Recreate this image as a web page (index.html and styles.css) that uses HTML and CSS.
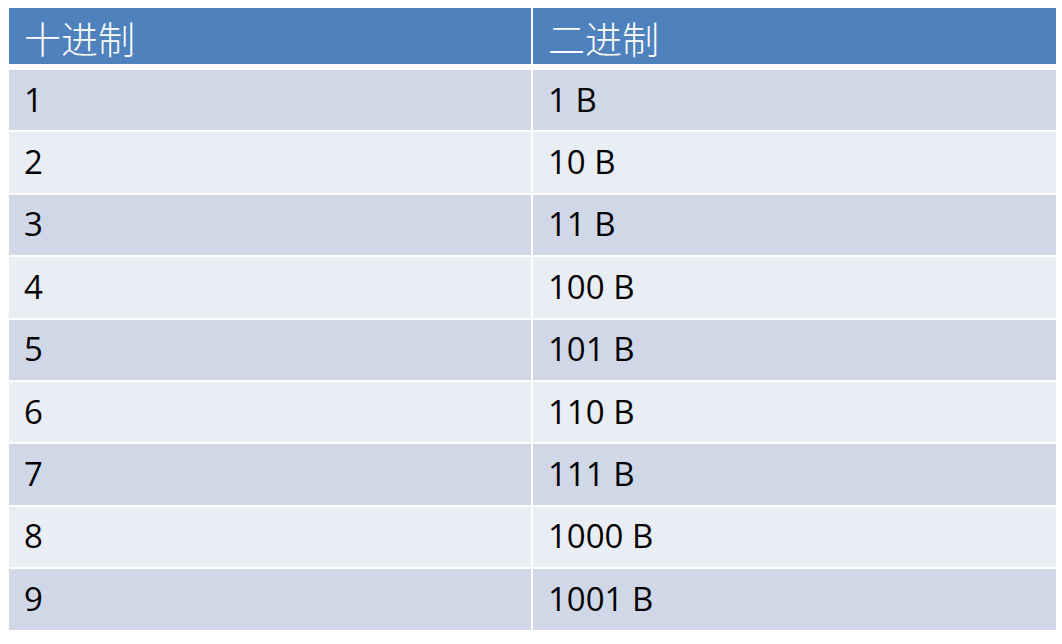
FILE: index.html
```html
<!DOCTYPE html>
<html lang="zh">
<head>
<meta charset="utf-8">
<link rel="stylesheet" href="styles.css">
</head>
<body>
<div class="table">
  <div class="cell head">十进制</div>
  <div class="cell head">二进制</div>
  <div class="cell odd">1</div><div class="cell odd">1 B</div>
  <div class="cell even">2</div><div class="cell even">10 B</div>
  <div class="cell odd">3</div><div class="cell odd">11 B</div>
  <div class="cell even">4</div><div class="cell even">100 B</div>
  <div class="cell odd">5</div><div class="cell odd">101 B</div>
  <div class="cell even">6</div><div class="cell even">110 B</div>
  <div class="cell odd">7</div><div class="cell odd">111 B</div>
  <div class="cell even">8</div><div class="cell even">1000 B</div>
  <div class="cell odd">9</div><div class="cell odd">1001 B</div>
</div>
</body>
</html>
```
FILE: styles.css
```css
html, body {
  background: #ffffff;
}
body {
  margin: 8px 0 0 9px;
}
.table {
  display: grid;
  grid-template-columns: 522px 523px;
  grid-template-rows: 60px repeat(9, 60.4px);
  column-gap: 2px;
  row-gap: 2px;
  width: 1047px;
}
.cell {
  display: flex;
  align-items: center;
  padding-left: 15px;
  font-family: "Open Sans", "Noto Sans CJK SC", sans-serif;
  font-size: 33px;
  color: #000000;
  padding-bottom: 2px;
  box-sizing: border-box;
}
.head {
  background: #4f81bd;
  color: #ffffff;
  margin-bottom: 4px;
  font-family: "Noto Sans CJK SC", sans-serif;
  font-size: 37px;
  font-weight: 300;
  padding-left: 15px;
  padding-bottom: 0;
  padding-top: 3px;
}
.odd {
  background: #d0d8e8;
}
.even {
  background: #e9edf4;
}
```
